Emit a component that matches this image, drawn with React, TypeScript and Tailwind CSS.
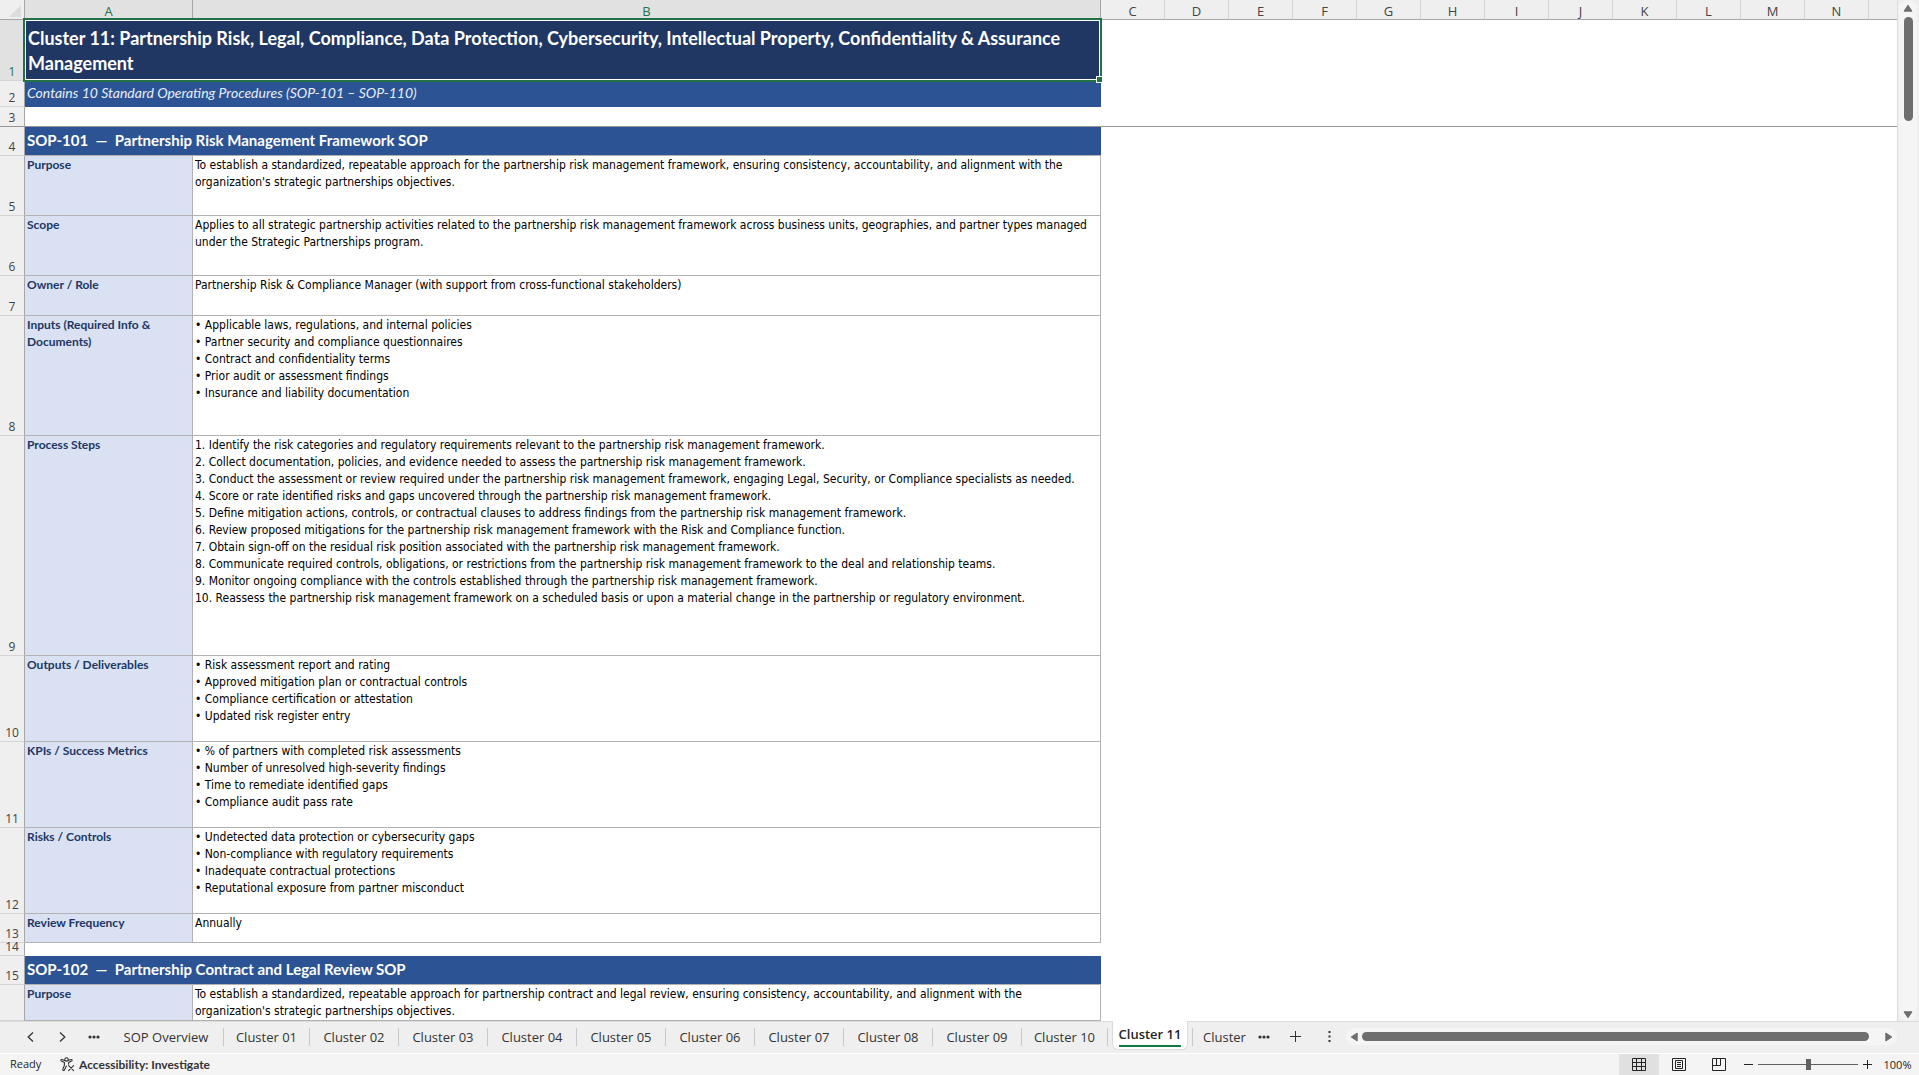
import type { ReactNode } from 'react'

interface SheetRow {
  num?: number
  kind: 'title' | 'subtitle' | 'frozen' | 'heading' | 'field' | 'blank'
  height: string
  label?: string
  lines?: string[]
}

const rows: SheetRow[] = [
  {
    num: 1,
    kind: 'title',
    height: 'h-[61px]',
    lines: [
      'Cluster 11: Partnership Risk, Legal, Compliance, Data Protection, Cybersecurity, Intellectual Property, Confidentiality & Assurance',
      'Management',
    ],
  },
  { num: 2, kind: 'subtitle', height: 'h-[26px]', lines: ['Contains 10 Standard Operating Procedures (SOP-101 – SOP-110)'] },
  { num: 3, kind: 'frozen', height: 'h-5' },
  { num: 4, kind: 'heading', height: 'h-[29px]', lines: ['SOP-101  —  Partnership Risk Management Framework SOP'] },
  {
    num: 5,
    kind: 'field',
    height: 'h-15',
    label: 'Purpose',
    lines: [
      'To establish a standardized, repeatable approach for the partnership risk management framework, ensuring consistency, accountability, and alignment with the',
      "organization's strategic partnerships objectives.",
    ],
  },
  {
    num: 6,
    kind: 'field',
    height: 'h-15',
    label: 'Scope',
    lines: [
      'Applies to all strategic partnership activities related to the partnership risk management framework across business units, geographies, and partner types managed',
      'under the Strategic Partnerships program.',
    ],
  },
  {
    num: 7,
    kind: 'field',
    height: 'h-10',
    label: 'Owner / Role',
    lines: ['Partnership Risk & Compliance Manager (with support from cross-functional stakeholders)'],
  },
  {
    num: 8,
    kind: 'field',
    height: 'h-30',
    label: 'Inputs (Required Info & Documents)',
    lines: [
      '• Applicable laws, regulations, and internal policies',
      '• Partner security and compliance questionnaires',
      '• Contract and confidentiality terms',
      '• Prior audit or assessment findings',
      '• Insurance and liability documentation',
    ],
  },
  {
    num: 9,
    kind: 'field',
    height: 'h-55',
    label: 'Process Steps',
    lines: [
      '1. Identify the risk categories and regulatory requirements relevant to the partnership risk management framework.',
      '2. Collect documentation, policies, and evidence needed to assess the partnership risk management framework.',
      '3. Conduct the assessment or review required under the partnership risk management framework, engaging Legal, Security, or Compliance specialists as needed.',
      '4. Score or rate identified risks and gaps uncovered through the partnership risk management framework.',
      '5. Define mitigation actions, controls, or contractual clauses to address findings from the partnership risk management framework.',
      '6. Review proposed mitigations for the partnership risk management framework with the Risk and Compliance function.',
      '7. Obtain sign-off on the residual risk position associated with the partnership risk management framework.',
      '8. Communicate required controls, obligations, or restrictions from the partnership risk management framework to the deal and relationship teams.',
      '9. Monitor ongoing compliance with the controls established through the partnership risk management framework.',
      '10. Reassess the partnership risk management framework on a scheduled basis or upon a material change in the partnership or regulatory environment.',
    ],
  },
  {
    num: 10,
    kind: 'field',
    height: 'h-[86px]',
    label: 'Outputs / Deliverables',
    lines: [
      '• Risk assessment report and rating',
      '• Approved mitigation plan or contractual controls',
      '• Compliance certification or attestation',
      '• Updated risk register entry',
    ],
  },
  {
    num: 11,
    kind: 'field',
    height: 'h-[86px]',
    label: 'KPIs / Success Metrics',
    lines: [
      '• % of partners with completed risk assessments',
      '• Number of unresolved high-severity findings',
      '• Time to remediate identified gaps',
      '• Compliance audit pass rate',
    ],
  },
  {
    num: 12,
    kind: 'field',
    height: 'h-[86px]',
    label: 'Risks / Controls',
    lines: [
      '• Undetected data protection or cybersecurity gaps',
      '• Non-compliance with regulatory requirements',
      '• Inadequate contractual protections',
      '• Reputational exposure from partner misconduct',
    ],
  },
  { num: 13, kind: 'field', height: 'h-[29px]', label: 'Review Frequency', lines: ['Annually'] },
  { num: 14, kind: 'blank', height: 'h-[13px]' },
  { num: 15, kind: 'heading', height: 'h-[29px]', lines: ['SOP-102  —  Partnership Contract and Legal Review SOP'] },
  {
    kind: 'field',
    height: 'h-9',
    label: 'Purpose',
    lines: [
      'To establish a standardized, repeatable approach for partnership contract and legal review, ensuring consistency, accountability, and alignment with the',
      "organization's strategic partnerships objectives.",
    ],
  },
]

const letters = ['C', 'D', 'E', 'F', 'G', 'H', 'I', 'J', 'K', 'L', 'M', 'N']

const tabs = [
  { name: 'SOP Overview', width: 'w-[115px]' },
  { name: 'Cluster 01', width: 'w-[86px]' },
  { name: 'Cluster 02', width: 'w-[89px]' },
  { name: 'Cluster 03', width: 'w-[89px]' },
  { name: 'Cluster 04', width: 'w-[89px]' },
  { name: 'Cluster 05', width: 'w-[89px]' },
  { name: 'Cluster 06', width: 'w-[89px]' },
  { name: 'Cluster 07', width: 'w-[89px]' },
  { name: 'Cluster 08', width: 'w-[89px]' },
  { name: 'Cluster 09', width: 'w-[89px]' },
  { name: 'Cluster 10', width: 'w-[86px]' },
]

function Lines({ lines }: { lines?: string[] }) {
  return (
    <>
      {lines?.map((line) => (
        <div key={line} className="whitespace-pre">{line}</div>
      ))}
    </>
  )
}

function RowCells({ row }: { row: SheetRow }) {
  switch (row.kind) {
    case 'title':
      return (
        <td colSpan={2} className="relative bg-[#203764] pt-1.5 pl-[3px] align-top font-['Lato'] text-[18px] leading-[25px] font-bold text-white">
          <Lines lines={row.lines} />
          {/* Active cell outline and fill handle */}
          <div className="absolute -top-0.5 -right-px -bottom-px -left-0.5 border-2 border-[#217346]">
            <div className="h-full border border-white" />
            <div className="absolute -right-[3px] -bottom-[3px] size-[7px] border border-white bg-[#217346]" />
          </div>
        </td>
      )
    case 'subtitle':
      return (
        <td colSpan={2} className="bg-[#2c5394] pt-[3px] pl-[2px] align-top font-['Lato'] text-[14px] leading-[17px] text-[#e8eefa] italic">
          <Lines lines={row.lines} />
        </td>
      )
    case 'heading':
      return (
        <td colSpan={2} className="border-b border-[#b2b2b2] bg-[#2c5394] pt-1 pl-[2px] align-top font-['Lato'] text-[15px] leading-[18px] font-bold text-white">
          <Lines lines={row.lines} />
        </td>
      )
    case 'field':
      return (
        <>
          <td className="border-r border-b border-[#b2b2b2] bg-[#d9e1f2] pl-[2px] align-top font-['Lato'] text-[12px] leading-[17px] font-bold text-[#203764]">
            {row.label}
          </td>
          <td className="border-r border-b border-[#b2b2b2] pt-px pl-[2px] align-top font-['DejaVu_Sans_Condensed'] text-[12px] leading-[17px] text-black">
            <Lines lines={row.lines} />
          </td>
        </>
      )
    case 'frozen':
      return <td colSpan={2} className="border-b border-[#969696]" />
    default:
      return <td colSpan={2} />
  }
}

function Sheet() {
  return (
    <table className="w-full table-fixed border-separate border-spacing-0 bg-white">
      <colgroup>
        <col className="w-[25px]" />
        <col className="w-[168px]" />
        <col className="w-[908px]" />
        {letters.map((l) => (
          <col key={l} className="w-16" />
        ))}
        <col />
      </colgroup>
      <thead>
        <tr className="h-5 bg-[#efefef] text-[13px] leading-[16px] text-[#444444]">
          <th className="border-r border-b border-[#a6a6a6] p-0">
            <svg className="mt-0.5 ml-[9px] size-3" viewBox="0 0 12 12">
              <path d="M12 0v12H0z" fill="#dcdcdc" />
            </svg>
          </th>
          <th className="border-r border-b border-[#a6a6a6] bg-[#e1e1e1] p-0 pt-0.5 font-normal text-[#217346]">A</th>
          <th className="border-r border-b border-[#a6a6a6] bg-[#e1e1e1] p-0 pt-0.5 font-normal text-[#217346]">B</th>
          {letters.map((l) => (
            <th key={l} className="border-r border-b border-r-[#d4d4d4] border-b-[#a6a6a6] p-0 pt-0.5 font-normal">{l}</th>
          ))}
          <th className="border-b border-[#a6a6a6] p-0" />
        </tr>
      </thead>
      <tbody>
        {rows.map((row, i) => (
          <tr key={i} className={row.height}>
            <th
              className={`border-r border-b border-r-[#a6a6a6] p-0 pb-1 align-bottom text-[12px] leading-[8px] font-normal ${
                row.kind === 'title' ? 'bg-[#e1e1e1] text-[#217346]' : 'bg-[#efefef] text-[#444444]'
              } ${row.kind === 'frozen' ? 'border-b-[#969696]' : 'border-b-[#d4d4d4]'}`}
            >
              {row.num}
            </th>
            <RowCells row={row} />
            <td colSpan={13} className={row.kind === 'frozen' ? 'border-b border-[#969696]' : ''} />
          </tr>
        ))}
      </tbody>
    </table>
  )
}

function VerticalScrollbar() {
  return (
    <div className="flex w-[22px] shrink-0 justify-center border-l border-[#dcdcdc] bg-[#efefef] pr-px">
      <div className="flex w-[18px] flex-col items-center rounded-full bg-[#f5f5f5] pt-1 pb-0.5">
        <button type="button" aria-label="Scroll up">
          <svg className="block h-2 w-[10px]" viewBox="0 0 10 8">
            <path d="M5 1.2 9 7.2H1z" fill="#6e6e6e" stroke="#6e6e6e" strokeLinejoin="round" />
          </svg>
        </button>
        <div className="mt-[5px] h-[104px] w-[9px] rounded-full bg-[#6e6e6e]" />
        <button type="button" aria-label="Scroll down" className="mt-auto">
          <svg className="block h-2 w-[10px]" viewBox="0 0 10 8">
            <path d="M5 6.8 1 .8h8z" fill="#6e6e6e" stroke="#6e6e6e" strokeLinejoin="round" />
          </svg>
        </button>
      </div>
    </div>
  )
}

function IconButton({ label, className, children }: { label: string; className: string; children: ReactNode }) {
  return (
    <button type="button" aria-label={label} className={`flex shrink-0 items-center justify-center ${className}`}>
      {children}
    </button>
  )
}

function Dots() {
  return (
    <svg className="h-1 w-3" viewBox="0 0 12 4" fill="#333333">
      <circle cx="2" cy="2" r="1.6" />
      <circle cx="6" cy="2" r="1.6" />
      <circle cx="10" cy="2" r="1.6" />
    </svg>
  )
}

function TabBar() {
  return (
    <div className="flex h-8 shrink-0 items-center border-t border-[#dcdcdc] bg-[#efefef] pr-[22px] pb-0.5 pl-[14px] text-[13px] text-[#333333]">
      <IconButton label="Previous sheet" className="w-8">
        <svg className="h-[10px] w-[7px]" viewBox="0 0 7 10" fill="none" stroke="#333333" strokeWidth="1.3">
          <path d="M6 .6 1.2 5 6 9.4" />
        </svg>
      </IconButton>
      <IconButton label="Next sheet" className="w-8">
        <svg className="h-[10px] w-[7px]" viewBox="0 0 7 10" fill="none" stroke="#333333" strokeWidth="1.3">
          <path d="M1 .6 5.8 5 1 9.4" />
        </svg>
      </IconButton>
      <IconButton label="More sheets before" className="w-[31px]">
        <Dots />
      </IconButton>
      {tabs.map((tab) => (
        <button
          key={tab.name}
          type="button"
          className={`h-[18px] shrink-0 border-r border-[#c8c8c8] leading-[18px] whitespace-nowrap ${tab.width}`}
        >
          {tab.name}
        </button>
      ))}
      <button
        type="button"
        className="mx-1 -mt-px mb-px flex w-[76px] shrink-0 justify-center self-stretch rounded-b-md border border-t-0 border-[#dcdcdc] bg-white pt-[3px]"
      >
        <span className="h-[23px] border-b-2 border-[#107c41] leading-[20px] font-semibold text-[#242424]">Cluster 11</span>
      </button>
      <button type="button" className="h-[18px] shrink-0 border-l border-[#c8c8c8] pl-2.5 leading-[18px]">Cluster</button>
      <IconButton label="More sheets after" className="w-9">
        <Dots />
      </IconButton>
      <IconButton label="New sheet" className="w-7">
        <svg className="size-[11px]" viewBox="0 0 11 11" stroke="#333333">
          <path d="M5.5 0v11M0 5.5h11" />
        </svg>
      </IconButton>
      <div className="mr-2 ml-3 flex w-4 justify-center">
        <svg className="h-[11px] w-[3px]" viewBox="0 0 3 11" fill="#333333">
          <path d="M.5 0h2v2h-2zM.5 4.5h2v2h-2zM.5 9h2v2h-2z" />
        </svg>
      </div>
      <div className="flex h-[17px] flex-1 items-center rounded-full bg-[#f5f5f5] px-1">
        <button type="button" aria-label="Scroll left">
          <svg className="block h-[10px] w-2" viewBox="0 0 8 10">
            <path d="M1.2 5 7.2 1v8z" fill="#6e6e6e" stroke="#6e6e6e" strokeLinejoin="round" />
          </svg>
        </button>
        <div className="mr-4 ml-1 h-[9px] flex-1 rounded-full bg-[#6e6e6e]" />
        <button type="button" aria-label="Scroll right">
          <svg className="block h-[10px] w-2" viewBox="0 0 8 10">
            <path d="M6.8 5 .8 1v8z" fill="#6e6e6e" stroke="#6e6e6e" strokeLinejoin="round" />
          </svg>
        </button>
      </div>
    </div>
  )
}

function StatusBar() {
  return (
    <div className="flex h-[22px] shrink-0 items-stretch border-t border-white bg-[#f4f4f4] text-[11px] leading-[20px] text-[#242424]">
      <span className="w-[60px] pl-[10px]">Ready</span>
      <button type="button" className="flex items-center gap-1 font-['Lato'] text-[12px] font-bold text-[#333333]">
        <svg className="h-[15px] w-[15px]" viewBox="0 0 15 15" fill="none" stroke="#333333" strokeWidth="1.1" strokeLinecap="round" strokeLinejoin="round">
          <circle cx="6.5" cy="2.4" r="1.7" />
          <path d="M4.8 3.6 2 2.5c-1-.3-1.6 1-.7 1.5L4.4 5.6v2.6L2.8 12.4c-.3 1.1 1.1 1.6 1.6.6L6.4 9" />
          <path d="M8.2 3.6 11 2.5c1-.3 1.6 1 .7 1.5L8.6 5.6v1.6" />
          <path d="M8.6 8.6l5 5M13.6 8.6l-5 5" />
        </svg>
        Accessibility: Investigate
      </button>
      <div className="ml-auto flex items-stretch">
        <IconButton label="Normal view" className="w-10 bg-[#e0e0e0]">
          <svg className="h-[13px] w-[14px]" viewBox="0 0 14 13" fill="none" stroke="#242424">
            <path d="M.5 .5h13v12H.5zM4.5 0v13M9.5 0v13M0 4.5h14M0 8.5h14" />
          </svg>
        </IconButton>
        <IconButton label="Page layout view" className="w-10">
          <svg className="h-[13px] w-[14px]" viewBox="0 0 14 13" fill="none" stroke="#242424">
            <path d="M.5 .5h13v12H.5zM3.5 2.5h7v8h-7zM5 4.5h4M5 6.5h4M5 8.5h4" />
          </svg>
        </IconButton>
        <IconButton label="Page break preview" className="w-10">
          <svg className="h-[13px] w-[14px]" viewBox="0 0 14 13" fill="none" stroke="#242424">
            <path d="M.5 .5h13v12H.5zM.5 7.5h8v-7M4.5 .5v7" />
          </svg>
        </IconButton>
        <IconButton label="Zoom out" className="w-[19px]">
          <svg className="size-[9px]" viewBox="0 0 9 9" stroke="#242424">
            <path d="M0 4.5h9" />
          </svg>
        </IconButton>
        <input
          type="range"
          aria-label="Zoom"
          min={0}
          max={200}
          defaultValue={100}
          className="h-[11px] w-[100px] appearance-none self-center bg-[linear-gradient(#616161,#616161)] bg-[length:100%_1px] bg-center bg-no-repeat [&::-webkit-slider-thumb]:h-[11px] [&::-webkit-slider-thumb]:w-[5px] [&::-webkit-slider-thumb]:appearance-none [&::-webkit-slider-thumb]:bg-[#616161]"
        />
        <IconButton label="Zoom in" className="w-[18px]">
          <svg className="size-[9px]" viewBox="0 0 9 9" stroke="#242424">
            <path d="M0 4.5h9M4.5 0v9" />
          </svg>
        </IconButton>
        <button type="button" className="w-[43px] text-center">100%</button>
      </div>
    </div>
  )
}

export default function App() {
  return (
    <div className="flex h-screen flex-col overflow-hidden bg-[#efefef] font-['Open_Sans',sans-serif]">
      <div className="flex min-h-0 flex-1">
        <div className="min-w-0 flex-1 overflow-hidden bg-white">
          <Sheet />
        </div>
        <VerticalScrollbar />
      </div>
      <TabBar />
      <StatusBar />
    </div>
  )
}
